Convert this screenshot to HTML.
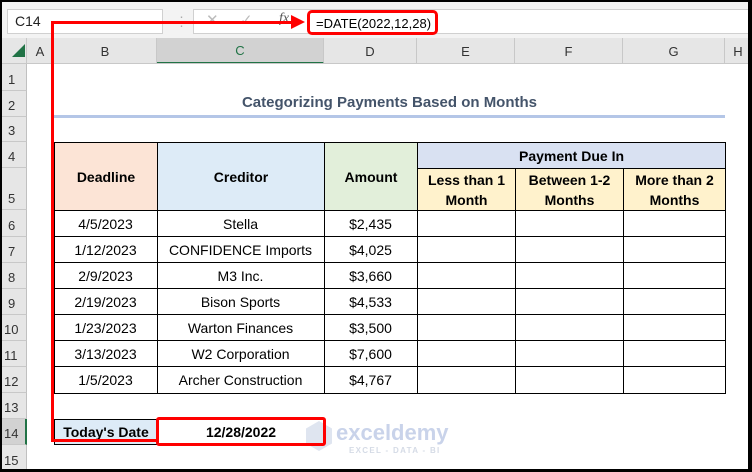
<!DOCTYPE html><html><head><style>
body{margin:0;width:752px;height:472px;overflow:hidden;background:#fff;font-family:"Liberation Sans",Calibri,sans-serif;position:relative}
.a{position:absolute;box-sizing:border-box}
.rh{position:absolute;left:0;width:27px;background:#e6e6e6;border-bottom:1px solid #c8c8c8;border-right:1px solid #c0c0c0;font-size:13px;color:#333;text-align:left;padding-left:8px;box-sizing:border-box;display:flex;align-items:flex-end;padding-bottom:3px}
.ch{position:absolute;top:38px;height:26px;background:#e6e6e6;border-right:1px solid #c8c8c8;font-size:13px;color:#333;display:flex;align-items:center;justify-content:center;box-sizing:border-box}
.c{position:absolute;box-sizing:border-box;display:flex;align-items:center;justify-content:center;font-size:14px;color:#000;text-align:center;line-height:20px}
.b{font-weight:bold}
</style></head><body>
<div class="a" style="left:0;top:0;width:752px;height:38px;background:#f3f3f3"></div>
<div class="a" style="left:7px;top:9px;width:156px;height:25px;background:#fff;border:1px solid #d0d0d0;font-size:14px;padding:3px 0 0 7px;color:#222">C14</div>
<div class="a" style="left:175px;top:14px;color:#aaa;font-size:13px">⋮</div>
<div class="a" style="left:193px;top:9px;width:560px;height:25px;background:#fff;border:1px solid #d0d0d0"></div>
<div class="a" style="left:206px;top:11px;color:#bbb;font-size:15px">✕</div>
<div class="a" style="left:240px;top:11px;color:#bbb;font-size:15px">✓</div>
<div class="a" style="left:279px;top:11px;color:#555;font-size:14px;font-style:italic;font-family:'Liberation Serif',serif">fx</div>
<div class="a" style="left:307px;top:10px;width:131px;height:25px;border:3px solid #f00;border-radius:5px;font-size:13px;padding:3px 0 0 6px;color:#000;white-space:nowrap">=DATE(2022,12,28)</div>
<div class="a" style="left:0;top:38px;width:27px;height:26px;background:#e6e6e6;border-right:1px solid #c8c8c8"></div>
<div class="a" style="left:12px;top:44px;width:0;height:0;border-left:13px solid transparent;border-bottom:13px solid #217346"></div>
<div class="ch" style="left:27px;width:27px">A</div>
<div class="ch" style="left:54px;width:103px">B</div>
<div class="ch" style="left:157px;width:167px;background:#d2d2d2;border-bottom:2px solid #217346;color:#217346">C</div>
<div class="ch" style="left:324px;width:93px">D</div>
<div class="ch" style="left:417px;width:98px">E</div>
<div class="ch" style="left:515px;width:108px">F</div>
<div class="ch" style="left:623px;width:102px">G</div>
<div class="ch" style="left:725px;width:27px">H</div>
<div class="a" style="left:0;top:63px;width:752px;height:1px;background:#c8c8c8"></div>
<div class="rh" style="top:64px;height:27px">1</div>
<div class="rh" style="top:91px;height:26px">2</div>
<div class="rh" style="top:117px;height:25px">3</div>
<div class="rh" style="top:142px;height:26px">4</div>
<div class="rh" style="top:168px;height:42px">5</div>
<div class="rh" style="top:210px;height:27px">6</div>
<div class="rh" style="top:237px;height:26px">7</div>
<div class="rh" style="top:263px;height:26px">8</div>
<div class="rh" style="top:289px;height:26px">9</div>
<div class="rh" style="top:315px;height:26px;padding-left:4px">10</div>
<div class="rh" style="top:341px;height:26px;padding-left:4px">11</div>
<div class="rh" style="top:367px;height:26px;padding-left:4px">12</div>
<div class="rh" style="top:393px;height:26px;padding-left:4px">13</div>
<div class="rh" style="top:419px;height:26px;padding-left:4px;background:#d2d2d2;border-right:2px solid #217346">14</div>
<div class="rh" style="top:445px;height:27px;padding-left:4px">15</div>
<div class="c b" style="left:54px;top:92px;width:671px;height:22px;color:#44546a;font-size:15px">Categorizing Payments Based on Months</div>
<div class="a" style="left:54px;top:115px;width:671px;height:3px;background:#b4c6e7"></div>
<div class="c b" style="left:54px;top:142px;width:104px;height:69px;background:#fce4d6;border:1px solid #000">Deadline</div>
<div class="c b" style="left:157px;top:142px;width:168px;height:69px;background:#ddebf7;border:1px solid #000">Creditor</div>
<div class="c b" style="left:324px;top:142px;width:94px;height:69px;background:#e2efda;border:1px solid #000">Amount</div>
<div class="c b" style="left:417px;top:142px;width:309px;height:27px;background:#d9e1f2;border:1px solid #000">Payment Due In</div>
<div class="c b" style="left:417px;top:168px;width:99px;height:43px;background:#fff2cc;border:1px solid #000">Less than 1<br>Month</div>
<div class="c b" style="left:515px;top:168px;width:109px;height:43px;background:#fff2cc;border:1px solid #000">Between 1-2<br>Months</div>
<div class="c b" style="left:623px;top:168px;width:103px;height:43px;background:#fff2cc;border:1px solid #000">More than 2<br>Months</div>
<div class="a" style="left:54px;top:210px;width:672px;height:184px;border:1px solid #000;border-top:none"></div>
<div class="a" style="left:54px;top:236px;width:672px;height:1px;background:#000"></div>
<div class="a" style="left:54px;top:262px;width:672px;height:1px;background:#000"></div>
<div class="a" style="left:54px;top:288px;width:672px;height:1px;background:#000"></div>
<div class="a" style="left:54px;top:314px;width:672px;height:1px;background:#000"></div>
<div class="a" style="left:54px;top:340px;width:672px;height:1px;background:#000"></div>
<div class="a" style="left:54px;top:366px;width:672px;height:1px;background:#000"></div>
<div class="a" style="left:157px;top:210px;width:1px;height:183px;background:#000"></div>
<div class="a" style="left:324px;top:210px;width:1px;height:183px;background:#000"></div>
<div class="a" style="left:417px;top:210px;width:1px;height:183px;background:#000"></div>
<div class="a" style="left:515px;top:210px;width:1px;height:183px;background:#000"></div>
<div class="a" style="left:623px;top:210px;width:1px;height:183px;background:#000"></div>
<div class="c" style="left:54px;top:211px;width:103px;height:26px">4/5/2023</div><div class="c" style="left:157px;top:211px;width:167px;height:26px">Stella</div><div class="c" style="left:324px;top:211px;width:93px;height:26px">$2,435</div>
<div class="c" style="left:54px;top:237px;width:103px;height:26px">1/12/2023</div><div class="c" style="left:157px;top:237px;width:167px;height:26px">CONFIDENCE Imports</div><div class="c" style="left:324px;top:237px;width:93px;height:26px">$4,025</div>
<div class="c" style="left:54px;top:263px;width:103px;height:26px">2/9/2023</div><div class="c" style="left:157px;top:263px;width:167px;height:26px">M3 Inc.</div><div class="c" style="left:324px;top:263px;width:93px;height:26px">$3,660</div>
<div class="c" style="left:54px;top:289px;width:103px;height:26px">2/19/2023</div><div class="c" style="left:157px;top:289px;width:167px;height:26px">Bison Sports</div><div class="c" style="left:324px;top:289px;width:93px;height:26px">$4,533</div>
<div class="c" style="left:54px;top:315px;width:103px;height:26px">1/23/2023</div><div class="c" style="left:157px;top:315px;width:167px;height:26px">Warton Finances</div><div class="c" style="left:324px;top:315px;width:93px;height:26px">$3,500</div>
<div class="c" style="left:54px;top:341px;width:103px;height:26px">3/13/2023</div><div class="c" style="left:157px;top:341px;width:167px;height:26px">W2 Corporation</div><div class="c" style="left:324px;top:341px;width:93px;height:26px">$7,600</div>
<div class="c" style="left:54px;top:367px;width:103px;height:26px">1/5/2023</div><div class="c" style="left:157px;top:367px;width:167px;height:26px">Archer Construction</div><div class="c" style="left:324px;top:367px;width:93px;height:26px">$4,767</div>
<div class="c b" style="left:54px;top:419px;width:104px;height:26px;background:#ddebf7;border:1px solid #000">Today's Date</div>
<div class="c b" style="left:157px;top:419px;width:168px;height:26px;border:1px solid #000">12/28/2022</div>
<svg class="a" style="left:304px;top:420px" width="30" height="32" viewBox="0 0 30 32"><polygon points="15,1 28,8.5 28,23.5 15,31 2,23.5 2,8.5" fill="#dfe5f0"/></svg>
<div class="a" style="left:156px;top:417px;width:170px;height:29px;border:3px solid #f00;border-radius:3px"></div>
<div class="a" style="left:336px;top:420px;font-size:22px;font-weight:bold;color:#c9d3ea">exceldemy</div>
<div class="a" style="left:349px;top:446px;font-size:8px;font-weight:bold;color:#d5dbe6;letter-spacing:1.3px">EXCEL - DATA - BI</div>
<div class="a" style="left:51px;top:21px;width:3px;height:421px;background:#f00"></div>
<div class="a" style="left:51px;top:21px;width:244px;height:3px;background:#f00"></div>
<div class="a" style="left:51px;top:439px;width:106px;height:3px;background:#f00"></div>
<div class="a" style="left:291px;top:15px;width:0;height:0;border-top:7px solid transparent;border-bottom:7px solid transparent;border-left:14px solid #f00"></div>
<div class="a" style="left:0;top:0;width:752px;height:472px;border:2px solid #000;border-right-width:4px;border-bottom-width:3px"></div>
</body></html>
